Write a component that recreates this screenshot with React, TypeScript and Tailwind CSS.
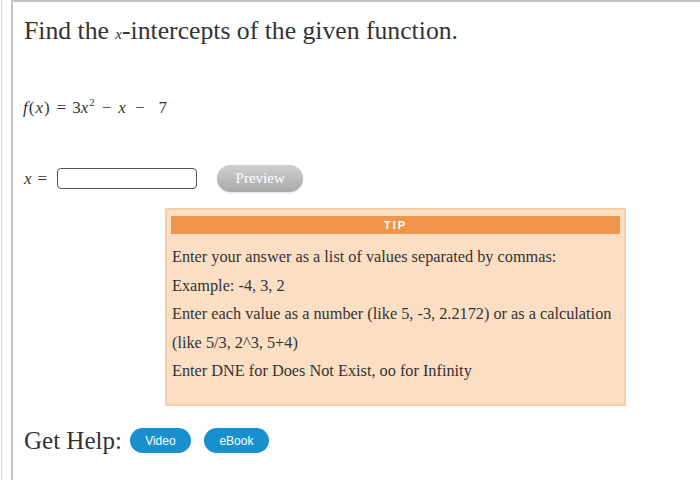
import React from 'react';

const serif = { fontFamily: '"Liberation Serif", "Times New Roman", serif' };
const sans = { fontFamily: '"Liberation Sans", Arial, sans-serif' };

const tipLines = [
  'Enter your answer as a list of values separated by commas:',
  'Example: -4, 3, 2',
  'Enter each value as a number (like 5, -3, 2.2172) or as a calculation',
  '(like 5/3, 2^3, 5+4)',
  'Enter DNE for Does Not Exist, oo for Infinity',
];

const App: React.FC = () => {
  return (
    <div className="w-[700px] h-[480px] bg-white flex overflow-hidden" style={serif}>
      <div className="w-[1px] ml-[1px] h-full bg-[#d4d4d4]" />
      <div className="ml-[9px] flex-1 h-full border-l-2 border-t-2 border-[#c4c4c4] text-[#333]">
        <h1 className="pl-[11px] pt-[14px] text-[25.7px] leading-[30px]">
          Find the <i className="text-[15px]">x</i>-intercepts of the given function.
        </h1>

        <div className="pl-[10px] mt-[49px] text-[17px] leading-[20px] flex items-baseline">
          <span className="tracking-[1px]">
            <i>f</i>(<i>x</i>)
          </span>
          <span className="mx-[6px]">=</span>
          <span>
            3<i>x</i>
            <sup className="text-[11px] relative top-[-7px] leading-none ml-[1px]">2</sup>
          </span>
          <span className="mx-[7px]">−</span>
          <i>x</i>
          <span className="mx-[9px]">−</span>
          <span className="ml-[5px]">7</span>
        </div>

        <div className="pl-[11px] mt-[47px] flex items-center">
          <span className="text-[17px]">
            <i>x</i>
            <span className="ml-[6px]">=</span>
          </span>
          <div className="ml-[10px] w-[140px] h-[21px] rounded-[4px] border border-[#555] bg-white" />
          <button
            className="ml-[20px] w-[86px] h-[27px] rounded-full text-white text-[15px] bg-gradient-to-b from-[#d0d0d0] to-[#a9a9a9] shadow-sm"
            style={serif}
          >
            Preview
          </button>
        </div>

        <div className="ml-[152px] mt-[16px] w-[461px] h-[198px] border-2 border-[#f6cfa5] bg-[#fbdfc4] px-[4px] pt-[6px]">
          <div
            className="h-[18px] bg-[#f0964c] text-white text-[11px] font-bold tracking-[2px] flex items-center justify-center"
            style={sans}
          >
            TIP
          </div>
          <div className="pl-[1px] pt-[9px] text-[16.3px] text-[#333]">
            {tipLines.map((line) => (
              <div key={line} className="leading-[28.5px]">
                {line}
              </div>
            ))}
          </div>
        </div>

        <div className="pl-[11px] mt-[16px] flex items-center">
          <span className="text-[25px]">Get Help:</span>
          <button
            className="ml-[8px] w-[61px] h-[25px] rounded-full bg-[#1890cd] text-white text-[12px]"
            style={sans}
          >
            Video
          </button>
          <button
            className="ml-[13px] w-[65px] h-[25px] rounded-full bg-[#1890cd] text-white text-[12px]"
            style={sans}
          >
            eBook
          </button>
        </div>
      </div>
    </div>
  );
};

export default App;
